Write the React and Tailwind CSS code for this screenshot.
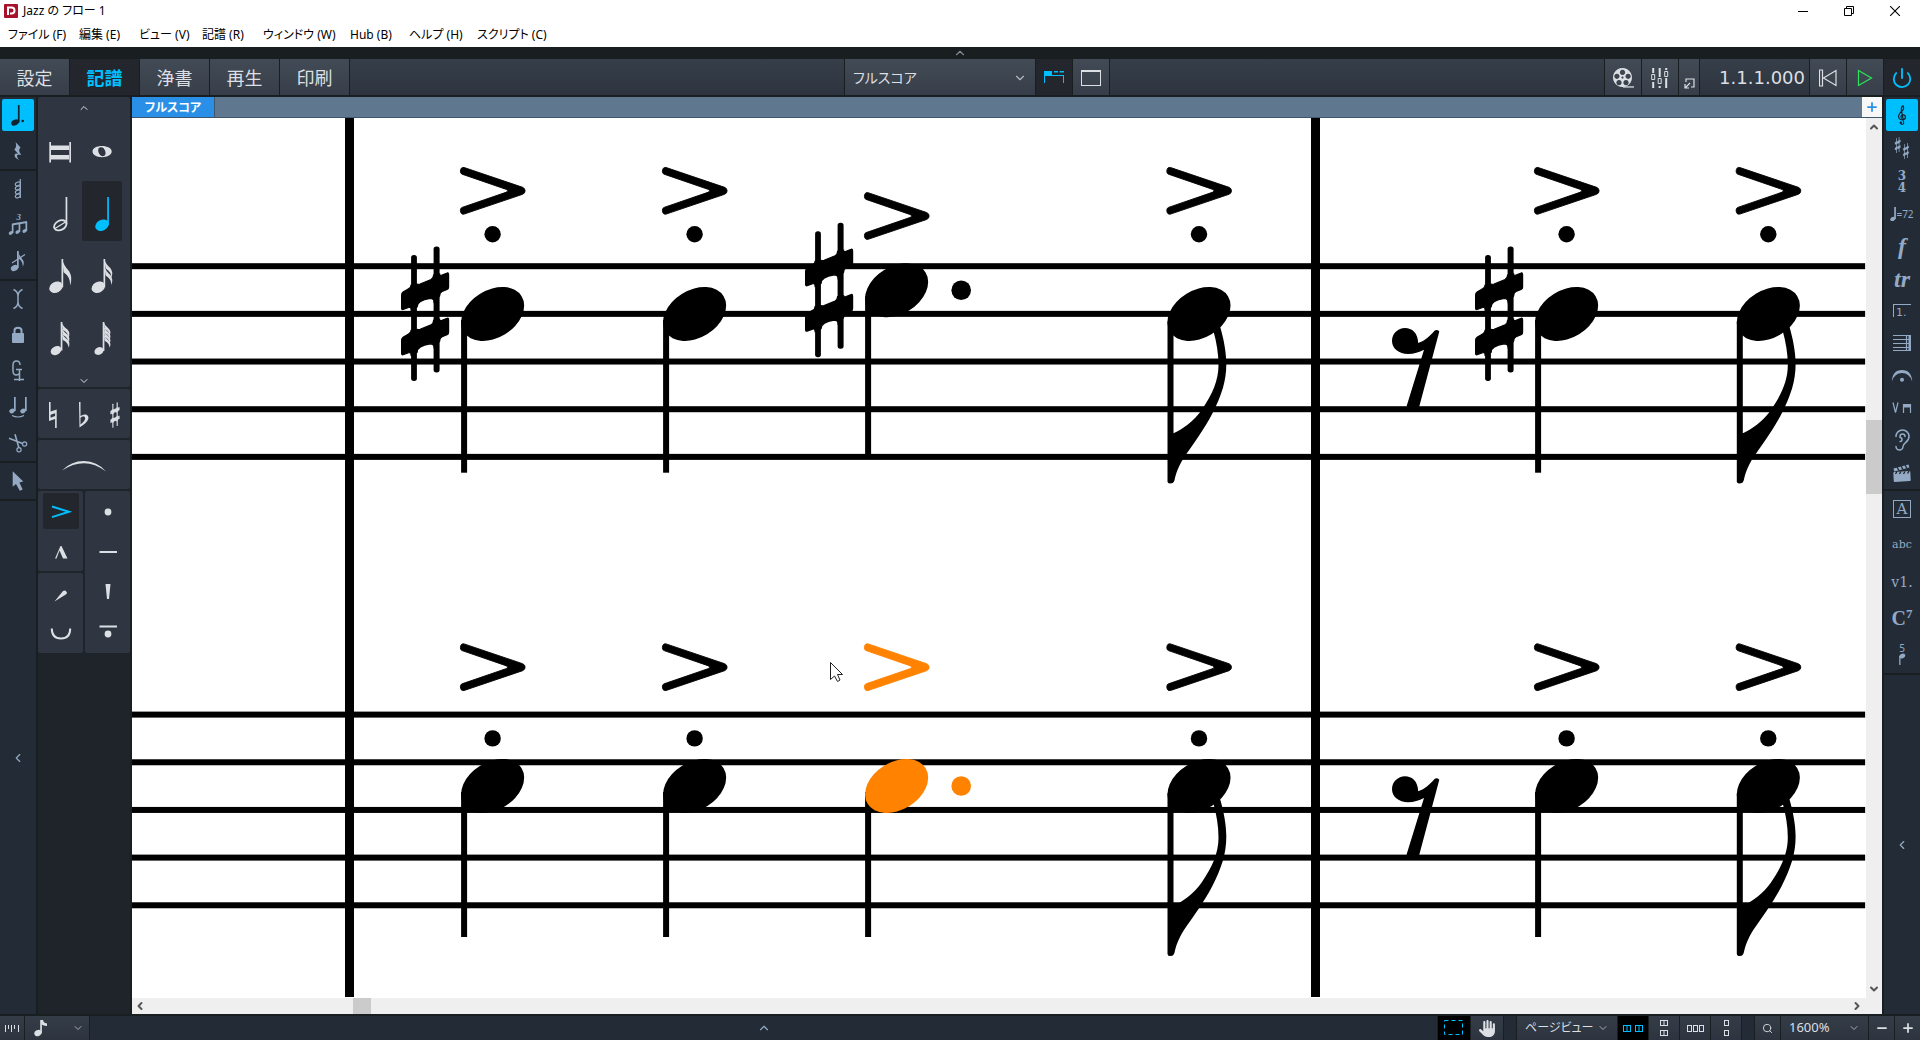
import React, { useState } from "react";
import clsx from "clsx";
import { ChevronDown, ChevronLeft, ChevronRight, ChevronUp, Ear, Minus, Plus, Power, Search } from "lucide-react";
import { FaHand } from "react-icons/fa6";

const MENUS = [
  { label: "ファイル (F)", width: "w-[71px]" },
  { label: "編集 (E)", width: "w-[60px]" },
  { label: "ビュー (V)", width: "w-[63px]" },
  { label: "記譜 (R)", width: "w-[61px]" },
  { label: "ウィンドウ (W)", width: "w-[87px]" },
  { label: "Hub (B)", width: "w-[59px]" },
  { label: "ヘルプ (H)", width: "w-[68px]" },
  { label: "スクリプト (C)", width: "w-[80px]" },
];

const MODES = ["設定", "記譜", "浄書", "再生", "印刷"];

const SHARP_BAR =
  "M-23.500 -19Q-23.500 -21-22 -22L-17 -25Q-14 -26-14 -29L-8 -30Q-7 -29.500-5 -30L6 -34.500Q8.500 -36 8.500 -39L14.500 -40Q14.500 -38 17 -39L22 -41Q23.500 -42 23.500 -39V-27Q23.500 -25 22 -24.500L17 -22.500Q14.500 -21.500 14.500 -18L9 -12Q9 -15.500 5 -15.500Q-8 -13.500-8 -7L-14 -4Q-14 -7.500-16.500 -6.500L-22 -4.500Q-23.500 -4-23.500 -6Z";

/* ---------- music symbols shared by the toolbars and the score ---------- */

function Sharp({ x, y, scale = 1 }) {
  return (
    <g transform={`translate(${x} ${y}) scale(${scale})`}>
      <rect x="-14" y="-59" width="5.800" height="126" rx="2.700" />
      <rect x="8.500" y="-67.500" width="6" height="126" rx="2.700" />
      <g stroke="currentColor" strokeWidth="1.200">
        <path d={SHARP_BAR} />
        <path d={SHARP_BAR} transform="translate(0 45.300)" />
      </g>
    </g>
  );
}

function Accent({ x, y, fill }) {
  return (
    <path
      transform={`translate(${x - 32.5} ${y})`}
      fill={fill}
      stroke={fill}
      strokeWidth=".9"
      d="M4 -23.300L62.500 -3.500Q65 -2.500 65 0Q65 2.500 62.500 3.500L4 23.300Q.5 24 .3 19.500Q.3 17.200 2 16.600L46.500 1.300Q48.500 0 46.500 -1.300L2 -16.600Q.3 -17.200 .3 -19.500Q.5 -24 4 -23.300Z"
    />
  );
}

function SmallNote({ x, y, stem, top, flags = 0, step = 5, reach = 8, drop = 17, rx = 7, ry = 5 }) {
  return (
    <g>
      <ellipse cx={x} cy={y} rx={rx} ry={ry} transform={`rotate(-28 ${x} ${y})`} />
      <rect x={stem - 0.8} y={top} width="1.700" height={y - top} />
      {Array.from({ length: flags }, (_, i) => (
        <path
          key={i}
          d={`M${stem} ${top + i * step}q1 ${drop / 4} ${reach - 2} ${drop / 2}q3.500 ${drop / 4} .8 ${drop / 1.8}q.6-${drop / 3}-${reach - 2.5}-${drop / 1.9}z`}
        />
      ))}
    </g>
  );
}

function Icon({ w = 36, h = 36, children, ...rest }) {
  return (
    <svg width={w} height={h} viewBox={`0 0 ${w} ${h}`} fill="currentColor" aria-hidden="true" {...rest}>
      {children}
    </svg>
  );
}

const line = { fill: "none", stroke: "currentColor", strokeWidth: 1.5 };

/* ---------- left toolbar ---------- */

const NOTE_TOOLS = [
  [
    {
      name: "音符",
      active: true,
      icon: (
        <Icon>
          <SmallNote x={15} y={25.5} stem={18.7} top={8} rx={4} ry={2.9} />
          <circle cx="22.700" cy="24" r="1.300" />
        </Icon>
      ),
    },
    {
      name: "休符",
      icon: (
        <Icon>
          <path d="M15.500 9L20.500 14.500Q17.500 17.500 21.300 22Q17 20.500 17 23Q17 24.800 19 27Q14.300 24.800 14.600 22Q15.200 20 18.200 20.700L14.300 16.500Q17.300 13.500 15.500 9Z" />
        </Icon>
      ),
    },
  ],
  [
    {
      name: "装飾音符",
      icon: (
        <Icon>
          <rect x="19.700" y="8" width="1.200" height="19" />
          {[12, 16, 20, 24].map((y) => (
            <ellipse key={y} cx="17.500" cy={y + 1} rx="2.700" ry="1.700" transform={`rotate(-25 17.500 ${y})`} {...line} strokeWidth="1.100" />
          ))}
        </Icon>
      ),
    },
    {
      name: "連符",
      icon: (
        <Icon>
          <text x="16.500" y="13" fontSize="9" fontWeight="bold" fontStyle="italic" fontFamily="Liberation Serif, serif">3</text>
          <path d="M12 16.500L27 14V16L12 18.500Z" />
          <SmallNote x={10.8} y={26} stem={12.6} top={17} rx={2.2} ry={1.7} />
          <SmallNote x={17.5} y={25} stem={19.4} top={16} rx={2.2} ry={1.7} />
          <SmallNote x={24.5} y={24} stem={26.3} top={15} rx={2.2} ry={1.7} />
        </Icon>
      ),
    },
    {
      name: "前打音",
      icon: (
        <Icon>
          <SmallNote x={14.5} y={25} stem={17.8} top={8} flags={1} reach={6} drop={15} rx={3.8} ry={2.9} />
          <path d="M12 20L25 11.500" {...line} strokeWidth="1.200" />
        </Icon>
      ),
    },
  ],
  [
    {
      name: "キャレット",
      icon: (
        <Icon>
          <path d="M13.500 8.500Q18 10.500 18 15V21Q18 25.500 13.500 27.500M22.500 8.500Q18 10.500 18 15V21Q18 25.500 22.500 27.500" {...line} />
        </Icon>
      ),
    },
    {
      name: "ロック",
      icon: (
        <Icon>
          <rect x="12" y="16" width="12" height="10" rx="1" />
          <path d="M14.500 16V13.500Q14.500 10.800 18 10.800Q21.500 10.800 21.500 13.500V16" {...line} strokeWidth="2" />
        </Icon>
      ),
    },
    {
      name: "コード",
      icon: (
        <Icon>
          <path d="M20 12Q20 8 16.500 8Q13 8 13 12V18Q13 22 16.500 22L19.500 21M16 16.500H22M19.500 16.500V28M14 26.500H24" {...line} />
        </Icon>
      ),
    },
    {
      name: "タイ",
      icon: (
        <Icon>
          <SmallNote x={12} y={22} stem={14.8} top={8} rx={2.8} ry={2.2} />
          <SmallNote x={23} y={22} stem={25.8} top={8} rx={2.8} ry={2.2} />
          <path d="M12 26.500Q18 29.500 24 26.500" {...line} strokeWidth="1.100" />
        </Icon>
      ),
    },
    {
      name: "ハサミ",
      icon: (
        <Icon>
          <path d="M9 13.300L22.500 18.500M15 9.300L18.800 22.500" {...line} strokeWidth="1.600" />
          <circle cx="24.600" cy="19" r="2.100" {...line} strokeWidth="1.200" />
          <circle cx="19" cy="24.700" r="2.100" {...line} strokeWidth="1.200" />
        </Icon>
      ),
    },
  ],
  [
    {
      name: "選択",
      icon: (
        <Icon>
          <path d="M12.700 8.300V23.700L16 21L19.800 27.800L22.700 26.600L19.400 19.500L23.300 18.500Z" />
        </Icon>
      ),
    },
  ],
];

/* ---------- duration cells ---------- */

const DURATIONS = [
  {
    name: "倍全音符",
    icon: (
      <Icon w={40} h={60}>
        <path d="M9.300 23H11V43.500H9.300ZM29.300 23H31V43.500H29.300ZM11 26.500H29V31H11ZM11 36H29V40.500H11Z" />
      </Icon>
    ),
  },
  {
    name: "全音符",
    icon: (
      <Icon w={40} h={60}>
        <path fillRule="evenodd" d="M20 27C25.500 27 29.700 29.300 29.700 32.500S25.500 38.200 20 38.200S10.500 35.800 10.500 32.500S14.500 27 20 27ZM18.500 28.300C16 28.800 15.800 31.500 16.800 34S19.800 37.600 21.800 37S24 34 23 31.500S20.500 27.800 18.500 28.300Z" />
      </Icon>
    ),
  },
  {
    name: "2分音符",
    icon: (
      <Icon w={40} h={60}>
        <ellipse cx="20.300" cy="44.300" rx="6.600" ry="4.600" transform="rotate(-28 20.300 44.300)" {...line} strokeWidth="1.800" />
        <path d="M15 47.500L25.500 41" {...line} strokeWidth="1.200" />
        <rect x="25.600" y="16" width="1.700" height="27" />
      </Icon>
    ),
  },
  { name: "4分音符", icon: <Icon w={40} h={60}><SmallNote x={20} y={44.3} stem={26} top={16} ry={5.4} /></Icon> },
  {
    name: "8分音符",
    icon: <Icon w={40} h={60}><SmallNote x={16} y={44.3} stem={22.3} top={16} flags={1} reach={9} drop={25} ry={5.4} /></Icon>,
  },
  {
    name: "16分音符",
    icon: <Icon w={40} h={60}><SmallNote x={16.3} y={44.3} stem={22.3} top={16} flags={2} step={7} reach={8} drop={18} ry={5.4} /></Icon>,
  },
  {
    name: "32分音符",
    icon: <Icon w={40} h={60}><SmallNote x={16} y={45.6} stem={21.5} top={17} flags={3} step={5} reach={8} drop={15} rx={5.6} ry={4.2} /></Icon>,
  },
  {
    name: "64分音符",
    icon: <Icon w={40} h={60}><SmallNote x={17} y={46} stem={21.5} top={17} flags={4} step={4} reach={7} drop={13} rx={4.8} ry={3.6} /></Icon>,
  },
];

const ARTICULATIONS = {
  left: [
    [
      { name: "アクセント", active: true, icon: <Icon><path d="M9 13.500L26 18.800L9 24.100" {...line} strokeWidth="2" /></Icon> },
      { name: "マルカート", icon: <Icon><path d="M12 25.500L17.500 13H18.500L24.500 25.500H20L16.500 17.500L13.500 25.500Z" /></Icon> },
    ],
    [
      { name: "強勢", icon: <Icon><path d="M11.500 26.500L20 16Q22.500 14.500 24 17.500Q24 19 22 20Z" /></Icon> },
      { name: "弱勢", icon: <Icon><path d="M8.800 13.500Q8.800 23.500 18 23.500T27.200 13.500" {...line} strokeWidth="2" /></Icon> },
    ],
  ],
  right: [
    { name: "スタッカート", icon: <Icon><circle cx="18" cy="19" r="3.400" /></Icon> },
    { name: "テヌート", icon: <Icon><rect x="9.500" y="18" width="17.500" height="2" /></Icon> },
    { name: "スタッカーティシモ", icon: <Icon><path d="M15.500 11H20.500L19 26H17Z" /></Icon> },
    {
      name: "テヌートスタッカート",
      icon: (
        <Icon>
          <rect x="9.500" y="12.500" width="17.500" height="2" />
          <circle cx="18" cy="21" r="3.400" />
        </Icon>
      ),
    },
  ],
};

/* ---------- right toolbar ---------- */

const PANEL_TOOLS = [
  {
    name: "拍子記号",
    icon: (
      <span className="flex flex-col font-['DejaVu_Serif',serif] text-xs font-bold leading-3">
        <span>3</span>
        <span>4</span>
      </span>
    ),
  },
  {
    name: "テンポ",
    icon: (
      <span className="flex items-center">
        <Icon w={6} h={14}>
          <SmallNote x={2.8} y={12} stem={5} top={0} rx={2.6} ry={2} />
        </Icon>
        <span className="text-[10px] leading-3">=72</span>
      </span>
    ),
  },
  { name: "強弱記号", icon: <span className="font-['Liberation_Serif',serif] text-2xl font-bold italic leading-6">f</span> },
  { name: "装飾音", icon: <span className="font-['Liberation_Serif',serif] text-2xl font-bold italic leading-6">tr</span> },
  {
    name: "反復記号",
    icon: <span className="h-[13px] w-[18px] border-l border-t border-current pl-0.5 text-left font-['DejaVu_Sans',sans-serif] text-[11px] leading-[15px]">1.</span>,
  },
  {
    name: "小節線",
    icon: (
      <Icon w={18} h={18}>
        <path d="M0 1.500H18M0 5.500H18M0 9.500H18M0 13.500H18M0 16.500H18M13.500 1V17" {...line} strokeWidth="1.200" />
        <rect x="15.500" y="1" width="2.500" height="16" />
      </Icon>
    ),
  },
  {
    name: "フェルマータ",
    icon: (
      <Icon w={22} h={14}>
        <path d="M.8 12.500Q1.500 1 11 1T21.200 12.500Q18.500 4 11 4T.8 12.500Z" />
        <circle cx="11" cy="10.800" r="2" />
      </Icon>
    ),
  },
  {
    name: "演奏技法",
    icon: (
      <Icon w={20} h={12}>
        <path d="M1 .5L3.500 10.500L6 .5" {...line} strokeWidth="1.200" />
        <path d="M11.500 11V2.500H18.500V11" {...line} strokeWidth="1.200" />
        <rect x="11" y="2" width="8" height="3.500" />
      </Icon>
    ),
  },
  { name: "演奏", icon: <Ear size={24} strokeWidth={1.5} /> },
  {
    name: "ビデオ",
    icon: (
      <Icon w={20} h={20}>
        <rect x="1.500" y="8.500" width="17" height="10" rx="1" transform="rotate(-3 10 13)" />
        <path d="M1.500 5.500L16.500 1.500L17.300 4.600L2.300 8.400Z" />
        <path d="M5 4L7 7.500M9 3L11 6.500M13 2L15 5.500M5 8.500L3.500 11M9 8.500L7.500 11M13 8.500L11.500 11M17 8L15.500 10.500" stroke="#232c36" strokeWidth="1.400" />
      </Icon>
    ),
  },
];

const TEXT_TOOLS = [
  { name: "リハーサルマーク", icon: <span className="size-[18px] border border-current font-['DejaVu_Serif',serif] text-[15px] leading-4">A</span> },
  { name: "テキスト", icon: <span className="font-['DejaVu_Serif',serif] text-[11px]">abc</span> },
  { name: "歌詞", icon: <span className="font-['DejaVu_Serif',serif] text-[14px]">v1.</span> },
  {
    name: "コード記号",
    icon: (
      <span className="flex items-start font-['Liberation_Serif',serif] font-bold">
        <span className="text-xl leading-5">C</span>
        <span className="text-[13px] leading-3">7</span>
      </span>
    ),
  },
  {
    name: "運指",
    icon: (
      <span className="flex flex-col items-center">
        <span className="text-[10px] leading-[9px]">5</span>
        <Icon w={8} h={12}>
          <ellipse cx="4.300" cy="3" rx="3" ry="2.200" transform="rotate(-28 4.300 3)" />
          <rect x="1.200" y="3" width="1.300" height="9" />
        </Icon>
      </span>
    ),
  },
];

function ToolButton({ tool, className }) {
  return (
    <button
      type="button"
      title={tool.name}
      aria-label={tool.name}
      className={clsx("flex w-9 items-center justify-center", className, tool.active && "text-[#12232e]")}
    >
      <span className={clsx("flex size-8 items-center justify-center rounded-xs", tool.active && "bg-[#00bfff]")}>{tool.icon}</span>
    </button>
  );
}

function LeftToolbar() {
  return (
    <nav aria-label="記譜ツールボックス" className="flex w-9 shrink-0 flex-col gap-0.5 text-[#94aac4] [&_svg]:shrink-0">
      {NOTE_TOOLS.map((group, i) => (
        <div key={i} className="flex flex-col bg-[#232c36]">
          {group.map((t) => (
            <ToolButton key={t.name} tool={t} className="h-9" />
          ))}
        </div>
      ))}
      <button type="button" aria-label="左パネルを隠す" className="flex flex-1 items-center justify-center bg-[#232c36]">
        <ChevronLeft size={14} />
      </button>
    </nav>
  );
}

function RightToolbar() {
  return (
    <nav aria-label="記譜パネル" className="flex w-9 shrink-0 flex-col gap-0.5 text-[#94aac4] [&_svg]:shrink-0">
      <div className="flex h-[392px] flex-col bg-[#232c36]">
        <ToolButton
          className="h-9 shrink-0"
          tool={{
            name: "音部記号",
            active: true,
            icon: (
              <Icon>
                <path
                  d="M16.500 25.500Q16.500 27.300 18 27.300Q20 27.300 19.600 25L17.300 12.500Q17.300 9.300 19 8.800Q20.200 10.500 19 13Q14.800 16.500 14.600 19.300Q14.600 22.800 18.300 22.800Q21.500 22.600 21.500 20Q21.300 17.800 19 17.800Q16.800 18 17 20Q17.200 21 18 21.400"
                  {...line}
                  strokeWidth="1.200"
                />
                <circle cx="16.800" cy="25.600" r="1.200" />
              </Icon>
            ),
          }}
        />
        <ToolButton
          className="min-h-0 flex-1"
          tool={{
            name: "調号",
            icon: (
              <Icon w={36} h={32}>
                <Sharp x={13.7} y={12} scale={0.12} />
                <Sharp x={22} y={18} scale={0.12} />
              </Icon>
            ),
          }}
        />
        {PANEL_TOOLS.map((t) => (
          <ToolButton key={t.name} tool={t} className="min-h-0 flex-1" />
        ))}
      </div>
      <div className="flex h-[182px] flex-col bg-[#232c36]">
        {TEXT_TOOLS.map((t) => (
          <ToolButton key={t.name} tool={t} className="min-h-0 flex-1" />
        ))}
      </div>
      <button type="button" aria-label="右パネルを表示" className="flex flex-1 items-center justify-center bg-[#232c36]">
        <ChevronLeft size={14} />
      </button>
    </nav>
  );
}

function ArticulationGroup({ items }) {
  return (
    <div className="flex w-[45px] flex-col rounded-xs bg-[#2f3541]">
      {items.map((a) => (
        <button key={a.name} type="button" aria-label={a.name} className="flex h-10 items-center justify-center">
          <span className={clsx("flex size-9 rounded-xs", a.active && "bg-[#23262c] text-[#00bfff]")}>{a.icon}</span>
        </button>
      ))}
    </div>
  );
}

function NotesPanel() {
  const [duration, setDuration] = useState("4分音符");
  return (
    <aside aria-label="音符パネル" className="flex w-[92px] shrink-0 flex-col gap-0.5 bg-[#1f242b] text-[#dcdfe3] [&_svg]:shrink-0">
      <div className="flex h-[290px] flex-col rounded-xs bg-[#2f3541]">
        <button type="button" aria-label="上へ" className="flex h-[22px] items-center justify-center">
          <ChevronUp size={12} />
        </button>
        <div className="grid grid-cols-[40px_40px] gap-0.5 pl-0.5">
          {DURATIONS.map((d) => (
            <button
              key={d.name}
              type="button"
              aria-label={d.name}
              onClick={() => setDuration(d.name)}
              className={clsx("h-[60px] rounded-xs", d.name === duration && "bg-[#23262c] text-[#00bfff]")}
            >
              {d.icon}
            </button>
          ))}
        </div>
        <button type="button" aria-label="下へ" className="flex flex-1 items-end justify-center">
          <ChevronDown size={12} />
        </button>
      </div>
      <div className="grid h-[49px] grid-cols-3 items-center justify-items-center rounded-xs bg-[#2f3541] pt-0.5">
        <button type="button" aria-label="ナチュラル">
          <Icon w={12} h={26}>
            <path d="M2 0H3.600V9.500L9.700 7.500V26H8.100V17L2 19ZM3.600 12.800V15.800L8.100 14V11.200Z" fillRule="evenodd" />
          </Icon>
        </button>
        <button type="button" aria-label="フラット">
          <Icon w={12} h={26}>
            <path d="M1 0H2.500V14Q5 12 8 12.500Q11 13.500 10.300 17Q9.500 20.500 1.500 25.500ZM2.500 15.800V22.500Q7 19 7.200 16.500Q7.200 14.500 5.500 14.300Q3.800 14.300 2.500 15.800Z" fillRule="evenodd" />
          </Icon>
        </button>
        <button type="button" aria-label="シャープ">
          <Icon w={12} h={26}>
            <Sharp x={6} y={13} scale={0.19} />
          </Icon>
        </button>
      </div>
      <button type="button" aria-label="スラー" className="flex h-[49px] items-center justify-center rounded-xs bg-[#2f3541] pt-0.5">
        <Icon w={46} h={12}>
          <path d="M1 10.500Q10 1 23 1T45 11.500Q34 3.200 23 3.200T1 10.500Z" />
        </Icon>
      </button>
      <div className="flex gap-0.5">
        <div className="flex flex-col gap-0.5">
          {ARTICULATIONS.left.map((items, i) => (
            <ArticulationGroup key={i} items={items} />
          ))}
        </div>
        <ArticulationGroup items={ARTICULATIONS.right} />
      </div>
    </aside>
  );
}

/* ---------- score ---------- */

const SPACE = 47.67;
const BARLINES = [213, 1179];
const SELECTED = "#ff8200";

const STAVES = [
  {
    top: 148.2,
    rest: 210,
    notes: [
      { x: 360.6, y: 196, stemEnd: 354.7, accent: 72.8, dot: 116.3, sharp: true },
      { x: 562.6, y: 196, stemEnd: 354.7, accent: 72.8, dot: 116.3 },
      { x: 764.6, y: 172.3, stemEnd: 339, accent: 98, dotted: true, sharp: true },
      { x: 1067, y: 196, stemEnd: 365.3, accent: 72.8, dot: 116.3, flag: true },
      { x: 1434.6, y: 196, stemEnd: 354.7, accent: 72.8, dot: 116.3, sharp: true },
      { x: 1636.3, y: 196, stemEnd: 365.3, accent: 72.8, dot: 116.3, flag: true },
    ],
  },
  {
    top: 596.6,
    rest: 658.3,
    notes: [
      { x: 360.6, y: 668, stemEnd: 819, accent: 549.2, dot: 620.4 },
      { x: 562.6, y: 668, stemEnd: 819, accent: 549.2, dot: 620.4 },
      { x: 764.6, y: 668, stemEnd: 819, accent: 549.2, dotted: true, selected: true },
      { x: 1067, y: 668, stemEnd: 837.7, accent: 549.2, dot: 620.4, flag: true },
      { x: 1434.6, y: 668, stemEnd: 819, accent: 549.2, dot: 620.4 },
      { x: 1636.3, y: 668, stemEnd: 837.7, accent: 549.2, dot: 620.4, flag: true },
    ],
  },
];

function ScoreNote({ note }) {
  const fill = note.selected ? SELECTED : "#000";
  const { x, y } = note;
  return (
    <g>
      <rect x={x - 31.5} y={y + 6} width="6" height={note.stemEnd - y - 6} rx={note.flag ? 2 : 0} />
      {note.flag && (
        <path
          transform={`translate(${x - 31.5} ${note.stemEnd})`}
          d="M3 -50H6C14 -53 27 -63 34 -73C45 -89 51 -103 51 -118C51 -130 49 -141 46 -152L52.500 -157C56 -145 58.800 -132 58.800 -119C58.800 -102 54 -88 45 -70C37 -54 24 -37 16 -25C11 -17 8 -9 7 -3Q6 0 3 0H1V-50Z"
        />
      )}
      <ellipse cx={x} cy={y} rx="34" ry="23.800" transform={`rotate(-31.500 ${x} ${y})`} fill={fill} />
      {note.dotted && <circle cx={x + 64.6} cy={y} r="9.800" fill={fill} />}
      {note.dot && <circle cx={x} cy={note.dot} r="8.200" />}
      {note.sharp && <Sharp x={x - 67.5} y={y} />}
      <Accent x={x} y={note.accent} fill={fill} />
    </g>
  );
}

function Score() {
  return (
    <svg className="block h-full min-w-0 flex-1 bg-white text-black" role="img" aria-label="楽譜">
      {BARLINES.map((x) => (
        <rect key={x} x={x} y="0" width="9" height="879" />
      ))}
      {STAVES.map((staff) => (
        <g key={staff.top}>
          {[0, 1, 2, 3, 4].map((i) => (
            <rect key={i} x="0" y={staff.top + i * SPACE - 3} width="99.950%" height="6" />
          ))}
          <path
            transform={`translate(1260 ${staff.rest})`}
            d="M13 0C20 0 26 5 26.200 15C33 13 38 8 42.500 2.800Q45 1 47.300 3.500L27 79.500Q20 80.500 14.500 78.500L32 21.700C27 24 22 26 16 26C7 26 0 20.500 0 13S6 0 13 0Z"
          />
          {staff.notes.map((n) => (
            <ScoreNote key={n.x} note={n} />
          ))}
        </g>
      ))}
      <path d="M698.500 544.500V561.500L702.500 558L705.500 563.500L708 562L705.500 556.500H710.500Z" fill="#fff" stroke="#222" strokeWidth="1" />
    </svg>
  );
}

/* ---------- chrome ---------- */

function TitleBar() {
  return (
    <header className="flex h-[47px] shrink-0 flex-col bg-white text-xs text-black [font-feature-settings:'palt']">
      <div className="flex h-[22px] items-center pl-1 pr-0.5">
        <Icon w={14} h={14} className="mr-[5px]">
          <rect width="14" height="14" rx="1" fill="#a8112c" />
          <path d="M4 11V3.500H7.500A3 3 0 0 1 7.500 9.500H6" fill="none" stroke="#fff" strokeWidth="2" />
        </Icon>
        <h1 className="flex-1">Jazz の フロー 1</h1>
        <button type="button" aria-label="最小化" className="flex w-[46px] justify-center">
          <Icon w={10} h={10}><rect y="5" width="10" height="1" /></Icon>
        </button>
        <button type="button" aria-label="元に戻す" className="flex w-[46px] justify-center">
          <Icon w={10} h={10}><path d="M.5 2.500H7.500V9.500H.5ZM2.500 2.500V.5H9.500V7.500H7.500" {...line} strokeWidth="1" /></Icon>
        </button>
        <button type="button" aria-label="閉じる" className="flex w-[46px] justify-center">
          <Icon w={10} h={10}><path d="M0 0L10 10M10 0L0 10" {...line} strokeWidth="1.100" /></Icon>
        </button>
      </div>
      <nav className="flex h-[25px] items-center pl-2">
        {MENUS.map((m) => (
          <button key={m.label} type="button" className={clsx("whitespace-nowrap text-left", m.width)}>
            {m.label}
          </button>
        ))}
      </nav>
    </header>
  );
}

const raised = "bg-linear-to-b from-[#424b55] to-[#373e49]";
const bar = "bg-linear-to-b from-[#363f49] to-[#2d343f]";

function Toolbar() {
  const [mode, setMode] = useState("記譜");
  return (
    <div className="flex h-9 shrink-0 gap-px text-[#dcdfe3] [&_svg]:shrink-0">
      {MODES.map((m) => (
        <button
          key={m}
          type="button"
          onClick={() => setMode(m)}
          className={clsx("w-[69px] pt-0.5 text-lg", m === mode ? "bg-[#23262c] font-bold text-[#00bfff]" : raised)}
        >
          {m}
        </button>
      ))}
      <div className={clsx("flex-[494]", bar)} />
      <label className={clsx("flex w-[190px] items-center px-2 pt-0.5", raised)}>
        <select aria-label="レイアウト" className="flex-1 appearance-none bg-transparent text-sm outline-none [font-feature-settings:'palt']">
          <option>フルスコア</option>
        </select>
        <ChevronDown size={14} className="text-[#b4b9bf]" />
      </label>
      <button type="button" aria-label="タブ表示" className="flex w-9 items-center justify-center bg-[#23262c] text-[#00bfff]">
        <Icon w={20} h={13}>
          <path d="M0 0H8V4H0ZM10 0H14V1.500H10ZM15.500 0H20V1.500H15.500ZM0 4H20V5H0ZM0 4H1V12H0ZM19 4H20V12H19Z" />
        </Icon>
      </button>
      <button type="button" aria-label="単一表示" className={clsx("flex w-9 items-center justify-center pt-0.5", raised)}>
        <span className="h-4 w-5 border border-t-2 border-current" />
      </button>
      <div className={clsx("flex-[494]", bar)} />
      <button type="button" aria-label="ビデオ" className={clsx("flex w-9 items-center justify-center pt-0.5", raised)}>
        <Icon w={22} h={22}>
          <path
            fillRule="evenodd"
            d="M10.500 1A9.500 9.500 0 1 1 10.490 1ZM10.500 2.800A2.600 2.600 0 1 0 10.510 2.800ZM4.900 6.700A2.600 2.600 0 1 0 4.910 6.700ZM16.100 6.700A2.600 2.600 0 1 0 16.110 6.700ZM7 13A2.600 2.600 0 1 0 7.010 13ZM14 13A2.600 2.600 0 1 0 14.010 13ZM10.500 9.600A1 1 0 1 0 10.510 9.600Z"
          />
          <path d="M11 19.300H22V20.600H11Z" />
        </Icon>
      </button>
      <button type="button" aria-label="ミキサー" className={clsx("flex w-9 items-center justify-center pt-0.5", raised)}>
        <Icon w={18} h={20}>
          <path d="M1.200 0H3.200V5H1.200ZM1.200 14H3.200V20H1.200ZM7.700 0H9.700V9H7.700ZM7.700 18H9.700V20H7.700ZM14.200 0H16.200V2H14.200ZM14.200 10H16.200V20H14.200Z" />
          <path d="M.7 6.500H3.700V11.500H.7ZM7.200 10.500H10.200V15.500H7.200ZM13.700 3.500H16.700V8.500H13.700Z" {...line} strokeWidth="1" />
        </Icon>
      </button>
      <button type="button" aria-label="トランスポート" className={clsx("flex w-5 items-end justify-center pb-1.5", raised)}>
        <Icon w={11} h={11}>
          <path d="M2 4V1H10V9H7M1 6V10H5M1 10L6 5" {...line} strokeWidth="1.200" />
        </Icon>
      </button>
      <div className={clsx("flex w-[109px] items-center justify-end pr-1 pt-0.5 font-['DejaVu_Sans',sans-serif] text-lg", bar)}>1.1.1.000</div>
      <button type="button" aria-label="先頭に戻る" className={clsx("flex w-9 items-center justify-center pt-0.5", raised)}>
        <Icon w={18} h={18}>
          <path d="M.5 1H3.500V17H.5ZM17 1.500V16.500L4.500 9Z" {...line} strokeWidth="1.200" />
        </Icon>
      </button>
      <button type="button" aria-label="再生開始" className={clsx("flex w-9 items-center justify-center pt-0.5 text-[#2fe35c]", raised)}>
        <Icon w={16} h={18}>
          <path d="M1.500 1.500L14.500 9L1.500 16.500Z" {...line} strokeWidth="1.200" />
        </Icon>
      </button>
      <button type="button" aria-label="オーディオエンジン" className="flex w-9 items-center justify-center bg-[#23262c] pt-0.5 text-[#00bfff]">
        <Power size={22} strokeWidth={2} />
      </button>
    </div>
  );
}

function PageIcon({ cells, w, h, split }) {
  return (
    <Icon w={w} h={h}>
      {cells.map(([x, y, cw, ch]) => (
        <g key={`${x}-${y}`} {...line} strokeWidth="1">
          <rect x={x + 0.5} y={y + 0.5} width={cw - 1} height={ch - 1} />
          {split && <path d={`M${x + cw / 2} ${y}V${y + ch}`} />}
        </g>
      ))}
    </Icon>
  );
}

const VIEWS = [
  { name: "見開き（横）", w: 20, h: 7, split: true, cells: [[0, 0, 8, 7], [12, 0, 8, 7]], active: true },
  { name: "見開き（縦）", w: 8, h: 16, split: true, cells: [[0, 0, 8, 6], [0, 10, 8, 6]] },
  { name: "単一ページ（横）", w: 17, h: 7, cells: [[0, 0, 5, 7], [6, 0, 5, 7], [12, 0, 5, 7]] },
  { name: "単一ページ（縦）", w: 5, h: 16, cells: [[0, 0, 5, 6], [0, 10, 5, 6]] },
];

function StatusBar() {
  const cell = "flex items-center justify-center bg-linear-to-b from-[#343d47] to-[#2d343f]";
  return (
    <footer className="flex h-6 shrink-0 gap-px text-[#dcdfe3] [&_svg]:shrink-0">
      <button type="button" aria-label="リズムグリッド表示" className={clsx("w-6", cell)}>
        <Icon w={14} h={7}>
          <path d="M0 0H1V7H0ZM3 0H4V4H3ZM6 0H7V7H6ZM9 0H10V4H9ZM13 0H14V7H13Z" />
        </Icon>
      </button>
      <button type="button" aria-label="リズムグリッド" className={clsx("w-16 gap-6 pl-1", cell)}>
        <Icon w={14} h={18}>
          <SmallNote x={4} y={14} stem={7} top={1} rx={3.8} ry={3} />
          <path d="M7 1H9Q9.500 4 13 4.500V7Q8 6.500 7 4.500Z" />
        </Icon>
        <ChevronDown size={12} className="text-[#a5abb2]" />
      </button>
      <button type="button" aria-label="下ゾーンを表示" className="flex flex-1 items-center justify-center bg-[#232c36] text-[#94aac4]">
        <ChevronUp size={14} />
      </button>
      <button type="button" aria-label="マーキーツール" className="flex w-8 items-center justify-center bg-black text-[#00bfff]">
        <Icon w={20} h={16}>
          <rect x=".5" y=".5" width="18" height="14" {...line} strokeWidth="1" strokeDasharray="4 3" />
        </Icon>
      </button>
      <button type="button" aria-label="ハンドツール" className={clsx("w-8", cell)}>
        <FaHand size={17} />
      </button>
      <div className="w-3 bg-[#232c36]" />
      <label className={clsx("w-[100px] px-2", cell)}>
        <select aria-label="ビュータイプ" className="flex-1 appearance-none bg-transparent text-xs outline-none [font-feature-settings:'palt']">
          <option>ページビュー</option>
        </select>
        <ChevronDown size={12} className="text-[#a5abb2]" />
      </label>
      {VIEWS.map((v) => (
        <button
          key={v.name}
          type="button"
          aria-label={v.name}
          className={clsx("w-[30px]", v.active ? "flex items-center justify-center bg-black text-[#00bfff]" : cell)}
        >
          <PageIcon {...v} />
        </button>
      ))}
      <div className="w-3 bg-[#232c36]" />
      <button type="button" aria-label="ズーム" className={clsx("w-[25px]", cell)}>
        <Search size={11} />
      </button>
      <label className={clsx("w-[87px] px-2", cell)}>
        <select aria-label="ズーム倍率" className="flex-1 appearance-none bg-transparent text-[13px] outline-none">
          <option>1600%</option>
        </select>
        <ChevronDown size={12} className="text-[#a5abb2]" />
      </label>
      <button type="button" aria-label="縮小" className={clsx("w-[25px]", cell)}>
        <Minus size={14} strokeWidth={3} />
      </button>
      <button type="button" aria-label="拡大" className={clsx("w-[25px]", cell)}>
        <Plus size={14} strokeWidth={3} />
      </button>
    </footer>
  );
}

function ScoreArea() {
  return (
    <main className="flex min-w-0 flex-1 flex-col">
      <div className="flex h-[21px] shrink-0 border-b border-[#3f566c] bg-[#5f788f]">
        <button type="button" className="w-[82px] bg-[#2a8fe6] pt-0.5 text-xs font-bold leading-[18px] text-white [font-feature-settings:'palt']">
          フルスコア
        </button>
        <div className="flex-1 border-l border-[#3f566c]" />
        <button type="button" aria-label="新規タブ" className="flex w-5 items-center justify-center bg-[#f7f7f7] text-[#2a8fe6]">
          <Plus size={14} strokeWidth={3} />
        </button>
      </div>
      <div className="flex min-h-0 flex-1">
        <Score />
        <div className="flex w-4 shrink-0 flex-col items-center bg-[#efefef] text-[#555]">
          <ChevronUp size={12} strokeWidth={4} className="mt-[3px]" />
          <div className="flex-[287]" />
          <div className="h-[74px] w-full bg-[#cbcbcb]" />
          <div className="flex-[489]" />
          <ChevronDown size={12} strokeWidth={4} className="mb-[3px]" />
        </div>
      </div>
      <div className="flex h-4 shrink-0 items-center bg-[#efefef] text-[#555]">
        <ChevronLeft size={12} strokeWidth={4} className="ml-0.5" />
        <div className="flex-[207]" />
        <div className="h-full w-[18px] bg-[#cbcbcb]" />
        <div className="flex-[1480]" />
        <ChevronRight size={12} strokeWidth={4} className="mr-[19px]" />
      </div>
    </main>
  );
}

export default function App() {
  return (
    <div className="flex h-screen flex-col overflow-hidden bg-[#191e21] font-['Noto_Sans','Noto_Sans_CJK_JP',sans-serif]">
      <TitleBar />
      <button type="button" aria-label="ツールバーを隠す" className="flex h-3 shrink-0 items-center justify-center text-[#7d8994]">
        <ChevronUp size={14} />
      </button>
      <Toolbar />
      <div className="my-0.5 flex min-h-0 flex-1 gap-0.5">
        <LeftToolbar />
        <NotesPanel />
        <ScoreArea />
        <RightToolbar />
      </div>
      <StatusBar />
    </div>
  );
}
